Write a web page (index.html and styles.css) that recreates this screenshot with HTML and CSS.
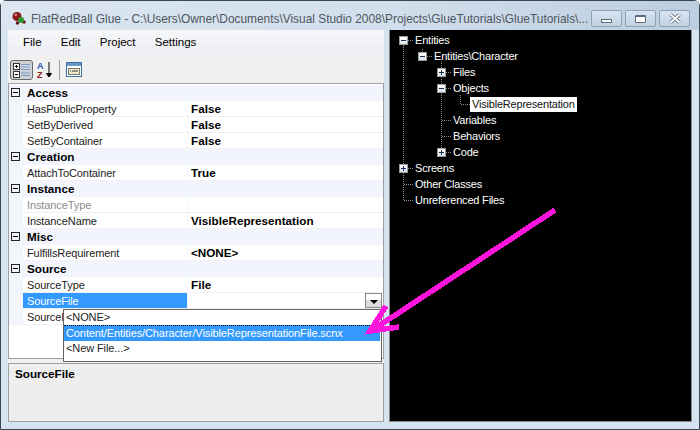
FILE: index.html
```html
<!DOCTYPE html>
<html>
<head>
<meta charset="utf-8">
<title>FlatRedBall Glue</title>
<link rel="stylesheet" href="styles.css">
</head>
<body>
<div class="window">
  <div class="titlebar">
    <svg class="appicon" width="16" height="16" viewBox="0 0 16 16"><circle cx="5.500" cy="12" r="1.700" fill="#6a1010"/><circle cx="12" cy="11" r="1.700" fill="#6a1010"/><circle cx="5" cy="5.500" r="4.500" fill="#8a1a1a"/><circle cx="3.800" cy="4" r="1.300" fill="#d88"/><circle cx="9" cy="9" r="3" fill="#2a9a2a"/></svg>
    <span class="title">FlatRedBall Glue - C:\Users\Owner\Documents\Visual Studio 2008\Projects\GlueTutorials\GlueTutorials\...</span>
    <div class="controls">
      <div class="ctl"><span class="g-min"></span></div>
      <div class="ctl"><span class="g-max"></span></div>
      <div class="ctl"><svg width="14" height="11" viewBox="0 0 14 11"><path d="M2.500 1.500 L11.500 9.500 M11.500 1.500 L2.500 9.500" stroke="#5e6c7a" stroke-width="3.600" fill="none"/><path d="M2.500 1.500 L11.500 9.500 M11.500 1.500 L2.500 9.500" stroke="#fff" stroke-width="1.800" fill="none"/></svg></div>
    </div>
  </div>
  <div class="client">
    <div class="left">
      <div class="menubar"><span>File</span><span>Edit</span><span>Project</span><span>Settings</span></div>
      <div class="toolbar">
        <div class="tb-on"><svg width="20" height="16" viewBox="0 0 20 16"><rect x="1.500" y="1.500" width="6" height="6" fill="#fff" stroke="#333"/><path d="M3 4.500H6M4.500 3V6" stroke="#000"/><rect x="1.500" y="9.500" width="6" height="6" fill="#fff" stroke="#333"/><path d="M3 12.500H6" stroke="#000"/><path d="M9 2.500h9M9 5h9M9 7.500h9M9 11h9M9 13.500h9" stroke="#7a9cc6"/></svg></div>
        <svg class="tb-az" width="18" height="18" viewBox="0 0 18 18"><text x="1" y="8" class="az-a">A</text><text x="1" y="17" class="az-z">Z</text><path d="M13 1V15M10.500 12.500L13 16L15.500 12.500Z" stroke="#000" fill="#000"/></svg>
        <div class="tb-sep"></div>
        <svg width="16" height="16" viewBox="0 0 16 16"><rect x=".5" y=".5" width="15" height="14" fill="#fff" stroke="#3a6ea5"/><rect x="1" y="1" width="14" height="3" fill="#6a96c8"/><rect x="2.500" y="6.500" width="11" height="6" fill="#f4ecc8" stroke="#777"/><path d="M4 9h1M6 9h6" stroke="#333"/></svg>
      </div>
      <div class="grid">
        <div class="cat"><i class="box"></i>Access</div>
        <div class="row"><span class="name">HasPublicProperty</span><b class="val">False</b></div>
        <div class="row"><span class="name">SetByDerived</span><b class="val">False</b></div>
        <div class="row"><span class="name">SetByContainer</span><b class="val">False</b></div>
        <div class="cat"><i class="box"></i>Creation</div>
        <div class="row"><span class="name">AttachToContainer</span><b class="val">True</b></div>
        <div class="cat"><i class="box"></i>Instance</div>
        <div class="row"><span class="name dim">InstanceType</span><b class="val"></b></div>
        <div class="row"><span class="name">InstanceName</span><b class="val">VisibleRepresentation</b></div>
        <div class="cat"><i class="box"></i>Misc</div>
        <div class="row"><span class="name">FulfillsRequirement</span><b class="val">&lt;NONE&gt;</b></div>
        <div class="cat"><i class="box"></i>Source</div>
        <div class="row"><span class="name">SourceType</span><b class="val">File</b></div>
        <div class="row"><span class="name sel">SourceFile</span><b class="val"></b><span class="dd"><i></i></span></div>
        <div class="row"><span class="name">SourceName</span><b class="val"></b></div>
        <div class="list">
          <div class="li">&lt;NONE&gt;</div>
          <div class="li on">Content/Entities/Character/VisibleRepresentationFile.scnx</div>
          <div class="li">&lt;New File...&gt;</div>
        </div>
      </div>
      <div class="help"><b>SourceFile</b></div>
    </div>
    <div class="splitter"></div>
    <div class="tree">
      <svg class="guides" width="302" height="180" viewBox="0 0 302 180"><path d="M13.500 15V170M32.500 19V22M51.500 31V118M70.500 65V74M18 10.500H23M37 26.500H42M56 42.500H61M56 58.500H61M71 74.500H80M52 90.500H61M52 106.500H61M56 122.500H61M18 138.500H23M14 154.500H23M14 170.500H23" stroke="#8c8c8c" stroke-dasharray="1 1" fill="none"/></svg>
      <div class="node d0"><i class="tw minus"></i><span>Entities</span></div>
      <div class="node d1"><i class="tw minus"></i><span>Entities\Character</span></div>
      <div class="node d2"><i class="tw plus"></i><span>Files</span></div>
      <div class="node d2"><i class="tw minus"></i><span>Objects</span></div>
      <div class="node d3"><i class="leaf"></i><span class="picked">VisibleRepresentation</span></div>
      <div class="node d2"><i class="leaf"></i><span>Variables</span></div>
      <div class="node d2"><i class="leaf"></i><span>Behaviors</span></div>
      <div class="node d2"><i class="tw plus"></i><span>Code</span></div>
      <div class="node d0"><i class="tw plus"></i><span>Screens</span></div>
      <div class="node d0"><i class="leaf"></i><span>Other Classes</span></div>
      <div class="node d0"><i class="leaf"></i><span>Unreferenced Files</span></div>
    </div>
  </div>
</div>
<svg class="arrow" width="700" height="430" viewBox="0 0 700 430" shape-rendering="crispEdges"><path d="M555 210 L371 331 M386 306 L370 331 L399 327" stroke="#ff14dc" stroke-width="5.500" fill="none"/></svg>
</body>
</html>
```

FILE: styles.css
```css
* { box-sizing: border-box; }
html, body { margin: 0; padding: 0; }
body { width: 700px; height: 430px; overflow: hidden; position: relative; background: #fff; font-family: "Liberation Sans", Arial, sans-serif; font-size: 12px; color: #000; }
.window { width: 700px; height: 430px; display: flex; flex-direction: column; background: #d6e4f2; border: 1px solid #3c4650; border-radius: 6px 6px 0 0; padding: 0 7px 7px 7px; }
.titlebar { height: 29px; flex: none; display: flex; align-items: center; padding-top: 6px; color: #4e5660; margin: 0 -7px; padding-left: 10px; padding-right: 9px; background: linear-gradient(90deg, #dbe6f1, #d2dfec 55%, #bccee0); }
.appicon { margin: 0 3px 0 1px; flex: none; }
.title { flex: 1; white-space: nowrap; overflow: hidden; font-size: 11.900px; }
.controls { display: flex; gap: 3px; align-self: flex-start; margin-top: 3px; }
.ctl { width: 31px; height: 17px; border: 1px solid #8ea2b6; border-radius: 2px; background: linear-gradient(#d8e4f0, #c0d2e4); display: flex; align-items: center; justify-content: center; }
.g-min { width: 11px; height: 4px; border: 1px solid #5e6c7a; background: #fff; margin-top: 4px; }
.g-max { width: 11px; height: 8px; border: 1px solid #5e6c7a; border-top-width: 2px; background: #fff; border-radius: 1px; }
.client { flex: 1; display: flex; min-height: 0; }
.left { width: 376px; flex: none; display: flex; flex-direction: column; background: #f0f0f0; }
.menubar { height: 24px; flex: none; display: flex; gap: 19.200px; align-items: center; padding-left: 15px; background: linear-gradient(#f6f7f9, #eceef1); font-size: 11.500px; }
.toolbar { height: 29px; flex: none; display: flex; align-items: center; padding: 3px 0 0 2px; gap: 3px; }
.tb-on { width: 23px; height: 20px; border: 1px solid #6a6a6a; border-radius: 3px; background: #cfd3d8; display: flex; align-items: center; justify-content: center; }
.az-a { font-size: 9px; fill: #2a55b0; font-weight: bold; }
.az-z { font-size: 9px; fill: #902020; font-weight: bold; }
.tb-sep { width: 1px; height: 20px; background: #a0a0a0; margin: 0 3px 0 2px; }
.grid { position: relative; height: 276px; flex: none; background: #fff; border: 1px solid #a0a0a0; padding-top: 1px; font-size: 11px; letter-spacing: -0.1px; }
.cat { height: 16px; background: #f2f5fb; font-weight: bold; display: flex; align-items: center; padding: 0 0 1px 2px; font-size: 11.700px; letter-spacing: 0; }
.box { width: 9px; height: 9px; border: 1px solid #222; margin-right: 7px; position: relative; flex: none; }
.box::after { content: ""; position: absolute; left: 1px; top: 3px; width: 5px; height: 1px; background: #000; }
.row { height: 16px; display: flex; align-items: stretch; background: #f2f5fb; padding-left: 14px; position: relative; }
.name { width: 164px; flex: none; background: #fff; border-bottom: 1px solid #f0f0f0; padding-left: 4px; line-height: 16px; color: #222; white-space: nowrap; overflow: hidden; }
.name.dim { color: #8a8a8a; }
.name.sel { background: #3399ff; color: #fff; }
.val { flex: 1; margin-left: 1px; background: #fff; border-bottom: 1px solid #f0f0f0; padding-left: 3px; line-height: 16px; font-size: 11.700px; letter-spacing: 0; }
.dd { position: absolute; right: 1px; top: 0; width: 17px; height: 15px; background: linear-gradient(#fff 45%, #dcdcdc 45%); border: 1px solid #888; display: flex; align-items: center; justify-content: center; }
.dd i { border: 4px solid transparent; border-top: 4px solid #000; border-bottom: 0; margin-top: 3px; }
.list { position: absolute; left: 54px; top: 225px; width: 319px; height: 53px; background: #fff; border: 1px solid #646464; z-index: 2; }
.li { height: 16px; line-height: 15px; padding-left: 2px; white-space: nowrap; color: #222; }
.li.on { background: #3399ff; color: #fff; border-top: 1px dotted #000; margin: -1px 1px 0 0; }
.help { margin-top: 4px; height: 59px; flex: none; background: #eeeeee; border: 1px solid #a0a0a0; padding: 3px 6px; font-size: 11.700px; }
.splitter { width: 5px; flex: none; background: #d6e4f2; }
.tree { flex: 1; position: relative; background: #000; border: 1px solid #888; border-top: 0; color: #fff; padding-top: 2px; font-size: 11px; letter-spacing: -0.2px; }
.guides { position: absolute; left: 0; top: 0; }
.node { height: 16px; display: flex; align-items: center; position: relative; }
.node span { line-height: 15px; padding: 0 2px; white-space: nowrap; }
.node .picked { background: #fff; color: #111; padding-right: 2px; }
.d0 { padding-left: 9px; }
.d1 { padding-left: 28px; }
.d2 { padding-left: 47px; }
.d3 { padding-left: 66px; }
.tw { width: 9px; height: 9px; background: linear-gradient(#fff, #dde2ea); border: 1px solid #999; margin-right: 5px; position: relative; flex: none; }
.tw::after { content: ""; position: absolute; left: 1px; top: 3px; width: 5px; height: 1px; background: #1c2f5a; }
.tw.plus::before { content: ""; position: absolute; left: 3px; top: 1px; width: 1px; height: 5px; background: #1c2f5a; }
.leaf { width: 9px; margin-left: 5px; height: 1px; flex: none; }
.arrow { position: absolute; left: 0; top: 0; pointer-events: none; z-index: 5; }
```
